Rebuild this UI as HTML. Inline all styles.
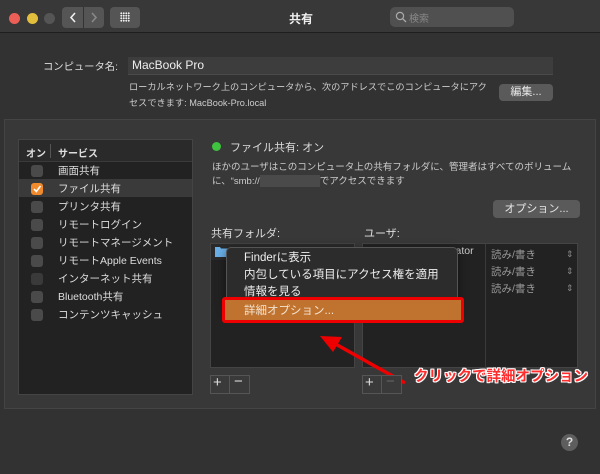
<!DOCTYPE html>
<html><head><meta charset="utf-8"><style>
*{margin:0;padding:0;box-sizing:border-box}
body{width:600px;height:474px;background:#323232;font-family:"Liberation Sans","Noto Sans CJK JP",sans-serif;color:#ddd;position:relative;overflow:hidden;font-size:11px}
.a{position:absolute;white-space:nowrap}
.btn{position:absolute;background:#5a5a5a;border-radius:4px;color:#e8e8e8;font-size:11px;text-align:center}
.cb{position:absolute;left:31px;width:12px;height:12px;border-radius:3px;background:#4a4a4a}
.row{position:absolute;left:58px;font-size:10.5px;color:#ddd}
.rw{position:absolute;left:491px;color:#999;font-size:10.5px}
</style></head><body>
<div class="a" style="left:0;top:0;width:600px;height:33px;background:#383838;border-bottom:1px solid #1e1e1e"></div>
<div class="a" style="left:9px;top:13px;width:11px;height:11px;border-radius:50%;background:#ec5f57"></div>
<div class="a" style="left:27px;top:13px;width:11px;height:11px;border-radius:50%;background:#e1bf3c"></div>
<div class="a" style="left:44px;top:13px;width:11px;height:11px;border-radius:50%;background:#555"></div>
<div class="a" style="left:62px;top:7px;width:42px;height:21px;border-radius:4px;background:#555"></div>
<div class="a" style="left:83px;top:7px;width:1px;height:21px;background:#333"></div>
<svg class="a" style="left:62px;top:7px" width="42" height="21"><path d="M13 6 L9 10.5 L13 15" stroke="#eee" stroke-width="1.6" fill="none"/><path d="M30 6 L34 10.5 L30 15" stroke="#888" stroke-width="1.6" fill="none"/></svg>
<div class="a" style="left:110px;top:7px;width:30px;height:21px;border-radius:4px;background:#555"></div>
<div class="a" style="left:120px;top:12px;width:10px;height:10px;background-image:radial-gradient(circle,#eee 0.9px,transparent 1.1px);background-size:2.5px 2.5px"></div>
<div class="a" style="left:289px;top:10px;font-size:12px;font-weight:bold;color:#eee">共有</div>
<div class="a" style="left:390px;top:7px;width:124px;height:20px;border-radius:5px;background:#505050"></div>
<svg class="a" style="left:395px;top:11px" width="12" height="12"><circle cx="5" cy="5" r="3.6" stroke="#aaa" stroke-width="1.2" fill="none"/><path d="M7.6 7.6 L11 11" stroke="#aaa" stroke-width="1.3"/></svg>
<div class="a" style="left:409px;top:10px;color:#888;font-size:10px">検索</div>

<div class="a" style="left:43px;top:58px;font-size:10.3px;color:#ddd">コンピュータ名:</div>
<div class="a" style="left:128px;top:57px;width:425px;height:18px;background:#3d3d3d;border-bottom:1px solid #4a4a4a"></div>
<div class="a" style="left:132px;top:58px;font-size:12px;color:#eee">MacBook Pro</div>
<div class="a" style="left:129px;top:79px;font-size:9.2px;line-height:16px;color:#ccc">ローカルネットワーク上のコンピュータから、次のアドレスでこのコンピュータにアク<br>セスできます: MacBook-Pro.local</div>
<div class="btn" style="left:499px;top:84px;width:54px;height:17px;line-height:17px">編集...</div>

<div class="a" style="left:4px;top:119px;width:592px;height:290px;background:#383838;border:1px solid #444"></div>
<div class="a" style="left:18px;top:139px;width:175px;height:256px;background:#222;border:1px solid #444"></div>
<div class="a" style="left:19px;top:140px;width:173px;height:22px;background:#2a2a2a;border-bottom:1px solid #3a3a3a"></div>
<div class="a" style="left:26px;top:145px;font-size:10px;font-weight:bold">オン</div>
<div class="a" style="left:50px;top:144px;width:1px;height:14px;background:#555"></div>
<div class="a" style="left:58px;top:145px;font-size:10px;font-weight:bold">サービス</div>
<div class="a" style="left:19px;top:179px;width:173px;height:18px;background:#3a3a3a"></div>
<div class="cb" style="top:165px"></div><div class="row" style="top:163px">画面共有</div>
<div class="cb" style="top:183px;background:#f08a2c"></div>
<svg class="a" style="left:32px;top:184px" width="10" height="10"><path d="M2 5 L4.3 7.5 L8.5 2" stroke="#fff" stroke-width="1.6" fill="none"/></svg>
<div class="row" style="top:181px">ファイル共有</div>
<div class="cb" style="top:201px"></div><div class="row" style="top:199px">プリンタ共有</div>
<div class="cb" style="top:219px"></div><div class="row" style="top:217px">リモートログイン</div>
<div class="cb" style="top:237px"></div><div class="row" style="top:235px">リモートマネージメント</div>
<div class="cb" style="top:255px"></div><div class="row" style="top:253px">リモートApple Events</div>
<div class="cb" style="top:273px;background:#3a3a3a"></div><div class="row" style="top:271px">インターネット共有</div>
<div class="cb" style="top:291px"></div><div class="row" style="top:289px">Bluetooth共有</div>
<div class="cb" style="top:309px"></div><div class="row" style="top:307px">コンテンツキャッシュ</div>

<div class="a" style="left:212px;top:142px;width:9px;height:9px;border-radius:50%;background:#3fc23f"></div>
<div class="a" style="left:230px;top:139px;font-size:11px">ファイル共有: オン</div>
<div class="a" style="left:212px;top:161px;font-size:9.5px;line-height:14px;color:#ccc">ほかのユーザはこのコンピュータ上の共有フォルダに、管理者はすべてのボリューム<br>に、“smb://<span style="display:inline-block;width:60px;height:12px;background:#4a4a4a;vertical-align:middle"></span>でアクセスできます</div>
<div class="btn" style="left:493px;top:200px;width:87px;height:18px;line-height:18px">オプション...</div>
<div class="a" style="left:211px;top:225px;font-size:11px">共有フォルダ:</div>
<div class="a" style="left:364px;top:225px;font-size:11px">ユーザ:</div>
<div class="a" style="left:210px;top:243px;width:145px;height:125px;background:#222;border:1px solid #444"></div>
<div class="a" style="left:211px;top:244px;width:143px;height:16px;background:#2a2a2a"></div>
<svg class="a" style="left:215px;top:246px" width="13" height="11"><path d="M0 1 H5 L6 2.5 H13 V11 H0 Z" fill="#6ab0e8"/></svg>
<div class="a" style="left:362px;top:243px;width:216px;height:125px;background:#222;border:1px solid #444"></div>
<div class="a" style="left:485px;top:244px;width:1px;height:123px;background:#3a3a3a"></div>
<div class="a" style="left:452px;top:245px;font-size:10.5px;color:#ccc">rator</div>
<div class="rw" style="top:247px">読み/書き</div><div class="rw" style="top:264px">読み/書き</div><div class="rw" style="top:281px">読み/書き</div>
<div class="a" style="left:566px;top:246px;color:#888;font-size:9px;line-height:17px">⇕<br>⇕<br>⇕</div>

<div class="a" style="left:226px;top:247px;width:232px;height:60px;background:#2c2c2c;border:1px solid #555;border-radius:5px;box-shadow:0 3px 10px rgba(0,0,0,.5)"></div>
<div class="a" style="left:244px;top:250px;font-size:11.5px;color:#eee;line-height:17px">Finderに表示<br>内包している項目にアクセス権を適用<br>情報を見る</div>
<div class="a" style="left:222px;top:297px;width:242px;height:26px;border:3px solid #e00;border-radius:3px;background:#c0722f"></div>
<div class="a" style="left:244px;top:302px;font-size:11.5px;color:#f3e4d0">詳細オプション...</div>

<svg class="a" style="left:0;top:0" width="600" height="474"><path d="M405 383 L332 342" stroke="#e00" stroke-width="3.5"/><path d="M320 336 L342 337 L333 352 Z" fill="#e00"/></svg>
<div class="a" style="left:414px;top:365px;font-size:14.5px;font-weight:bold;color:#ff2d2d;text-shadow:-1px -1px 0 #fff,1px -1px 0 #fff,-1px 1px 0 #fff,1px 1px 0 #fff,0 1px 0 #fff,0 -1px 0 #fff,1px 0 0 #fff,-1px 0 0 #fff">クリックで詳細オプション</div>

<div class="a" style="left:210px;top:375px;width:40px;height:19px;border:1px solid #555;background:#3a3a3a"></div>
<div class="a" style="left:229px;top:376px;width:1px;height:17px;background:#555"></div>
<div class="a" style="left:213px;top:374px;font-size:15px;color:#ddd">+</div><div class="a" style="left:234px;top:373px;font-size:15px;color:#ddd">−</div>
<div class="a" style="left:362px;top:375px;width:40px;height:19px;border:1px solid #555;background:#3a3a3a"></div>
<div class="a" style="left:381px;top:376px;width:1px;height:17px;background:#555"></div>
<div class="a" style="left:365px;top:374px;font-size:15px;color:#ddd">+</div><div class="a" style="left:386px;top:373px;font-size:15px;color:#666">−</div>

<div class="a" style="left:561px;top:434px;width:17px;height:17px;border-radius:50%;background:#5e5e5e;color:#ddd;font-size:12px;font-weight:bold;text-align:center;line-height:17px">?</div>
</body></html>
